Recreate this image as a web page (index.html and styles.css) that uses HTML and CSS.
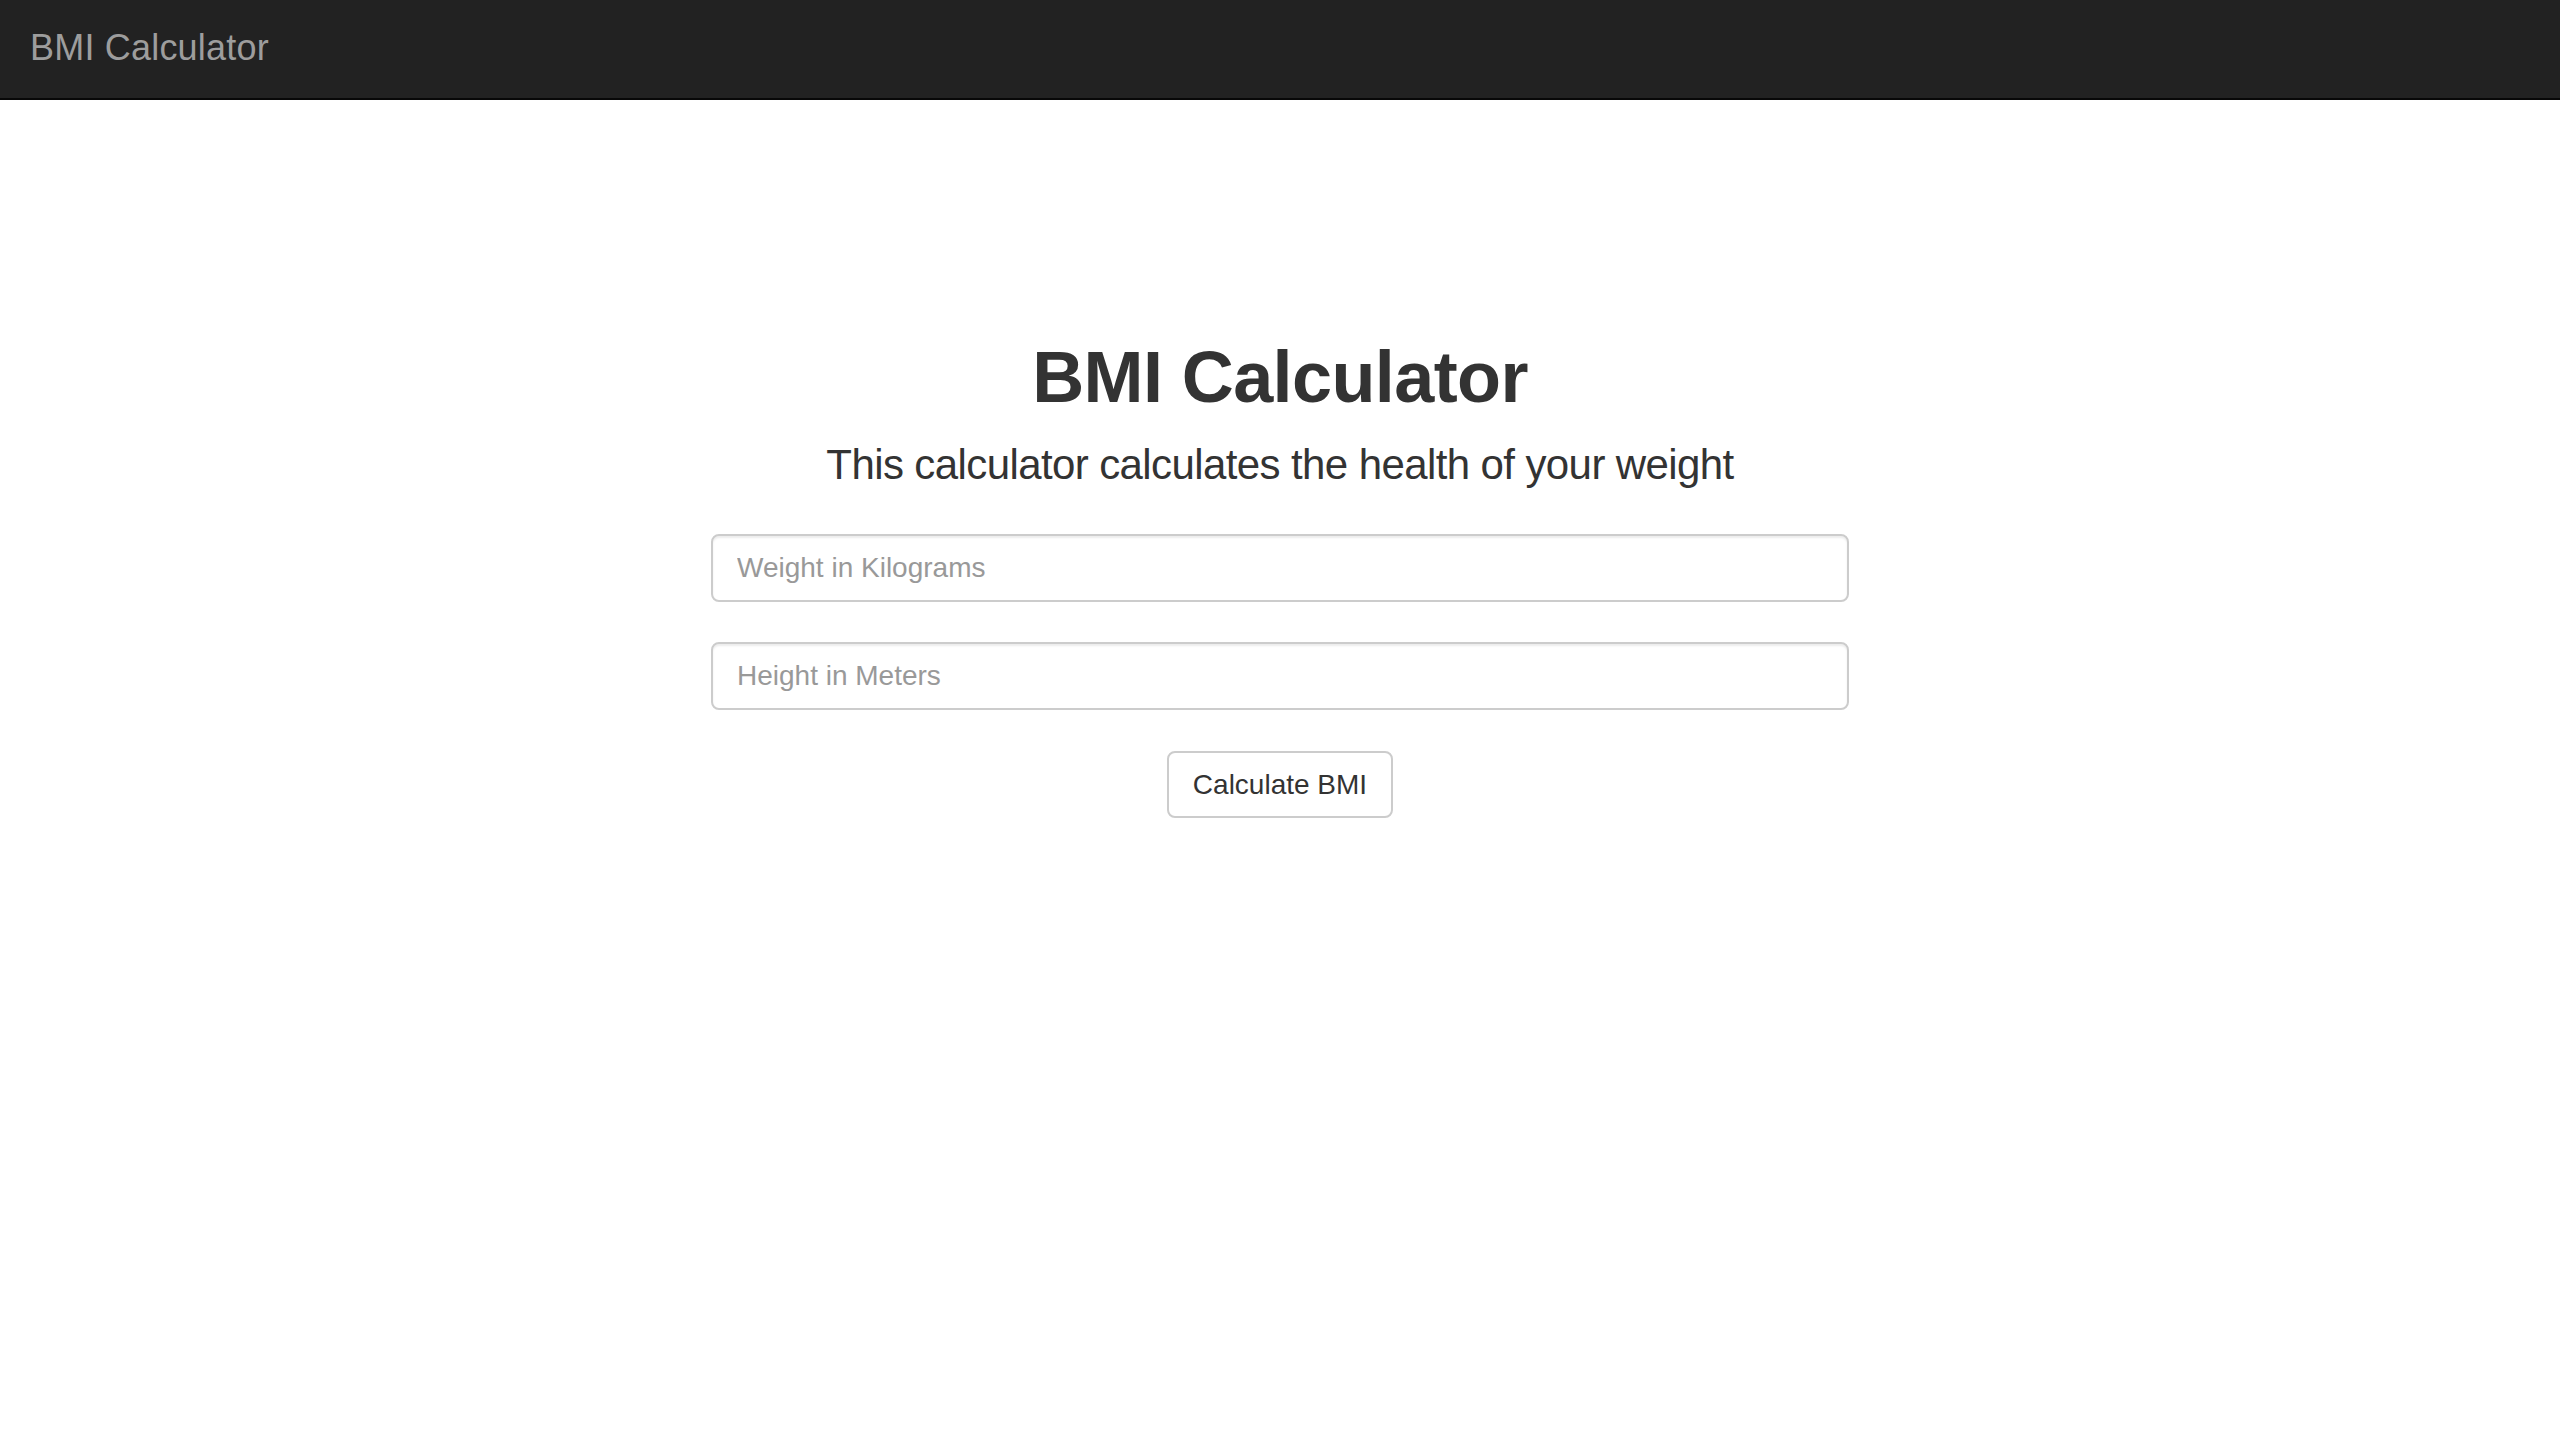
FILE: index.html
```html
<!DOCTYPE html>
<html lang="en">
<head>
<meta charset="utf-8">
<title>BMI Calculator</title>
<link rel="stylesheet" href="styles.css">
</head>
<body>
<nav class="navbar">
  <a class="brand" href="#">BMI Calculator</a>
</nav>
<main class="main">
  <h1 class="title">BMI Calculator</h1>
  <p class="lead">This calculator calculates the health of your weight</p>
  <form class="form">
    <input class="field" type="text" placeholder="Weight in Kilograms">
    <input class="field" type="text" placeholder="Height in Meters">
    <button class="btn" type="button">Calculate BMI</button>
  </form>
</main>
</body>
</html>
```

FILE: styles.css
```css
* { box-sizing: border-box; }
html, body { margin: 0; padding: 0; }
body {
  font-family: "Liberation Sans", Arial, sans-serif;
  font-size: 28px;
  line-height: 1.42857;
  color: #333;
  background: #fff;
}
.navbar {
  height: 100px;
  background: #222;
  border-bottom: 2px solid #080808;
  display: flex;
  align-items: center;
  padding: 0 30px;
}
.brand {
  font-size: 36px;
  color: #9d9d9d;
  text-decoration: none;
  line-height: 40px;
  margin-top: -2px;
  letter-spacing: 0.2px;
}
.main {
  display: flex;
  flex-direction: column;
  align-items: center;
  padding-top: 238px;
}
.title {
  margin: 0;
  font-size: 72px;
  font-weight: 700;
  line-height: 1.1;
  color: #333;
  letter-spacing: -0.6px;
}
.lead {
  margin: 18px 0 0;
  font-size: 42px;
  font-weight: 300;
  line-height: 60px;
  color: #333;
  letter-spacing: -0.6px;
}
.form {
  margin-top: 39px;
  width: 1138px;
  display: flex;
  flex-direction: column;
  align-items: center;
  gap: 40px;
}
.field {
  width: 100%;
  height: 68px;
  padding: 12px 24px;
  font-family: inherit;
  font-size: 28px;
  color: #555;
  background: #fff;
  border: 2px solid #ccc;
  border-radius: 8px;
  box-shadow: inset 0 2px 2px rgba(0,0,0,.075);
  outline: none;
}
.field::placeholder { color: #999; }
.btn {
  height: 67px;
  padding: 12px 24px;
  font-family: inherit;
  font-size: 28px;
  color: #333;
  background: #fff;
  border: 2px solid #ccc;
  border-radius: 8px;
  cursor: pointer;
  margin-top: 1px;
}
```
